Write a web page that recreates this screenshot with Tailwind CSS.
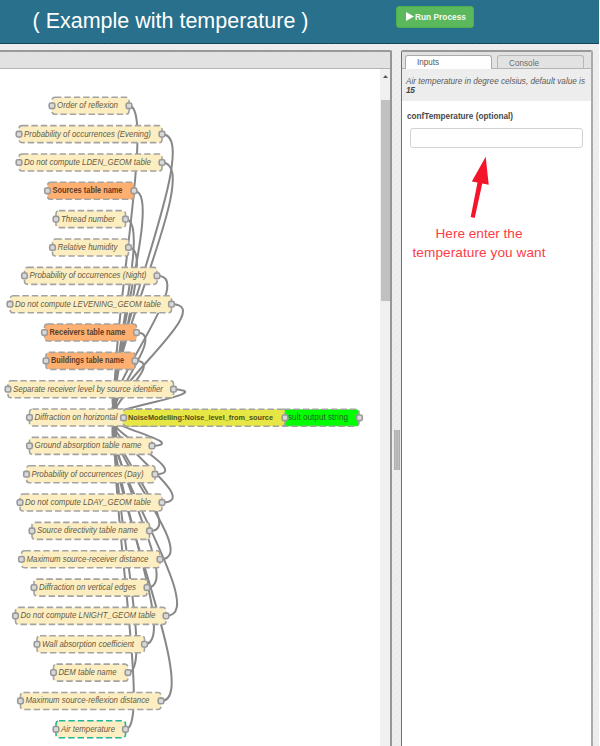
<!DOCTYPE html>
<html lang="en">
<head>
<meta charset="utf-8">
<title>Process editor</title>
<script src="https://cdn.jsdelivr.net/npm/@tailwindcss/browser@4"></script>
</head>
<body class="w-[600px] h-[746px] overflow-hidden bg-white font-['Liberation_Sans',Arial,sans-serif] flex flex-col">
<header class="w-[599px] h-[44px] shrink-0 bg-[#28708c] border-b border-[#174658] flex items-start pl-[32px]">
  <svg class="w-[280px] h-[40px] shrink-0" viewBox="0 0 280 40"><text x="0.5" y="27.7" font-size="21.5" fill="#fff" textLength="276" class="whitespace-pre">( Example with temperature )</text></svg>
  <button class="ml-[84px] mt-[6px] w-[78px] h-[22px] rounded-[3px] bg-[#5cb85c] border border-[#4cae4c] flex items-center justify-center">
    <svg class="w-[72px] h-[18px] overflow-visible" viewBox="-3 -1 72 18"><path d="M4 3L12 7.5L4 12Z" fill="#fff"/><text x="13" y="10.8" font-size="9.2" font-weight="bold" fill="#f3faf3" textLength="51" lengthAdjust="spacingAndGlyphs">Run Process</text></svg>
  </button>
</header>
<main class="flex-1 min-h-0 w-[599px] flex pt-[6px] bg-[repeating-linear-gradient(135deg,#eeeeee_0px,#eeeeee_2px,#e9e9e9_3px,#eeeeee_4px)]">
  <section class="w-[392px] shrink-0 border-t-2 border-r-2 border-t-[#999] border-r-[#969696] rounded-tr-[2px] flex flex-col bg-white">
    <div class="h-[17px] shrink-0 bg-[#e2e2e2] border-b border-[#b4b4b4]"></div>
    <div class="flex flex-1 min-h-0">
      <svg id="flow" class="w-[380px] h-[677px] shrink-0" viewBox="0 69 380 677" font-size="8.3"></svg>
      <div class="w-[10px] bg-[#f0f0f0] flex flex-col items-center">
        <svg class="w-[10px] h-[31px] shrink-0" viewBox="0 0 10 31"><path d="M3 9L5.5 6L8 9Z" fill="#555"/></svg>
        <div class="w-[9px] h-[201px] bg-[#c1c1c1]"></div>
      </div>
    </div>
  </section>
  <div class="w-[9px] pt-[380px]">
    <svg class="w-[9px] h-[40px]" viewBox="0 0 9 40"><path d="M2.9 0V40M5 0V40M7.1 0V40" stroke="#999" stroke-width="1.3"/></svg>
  </div>
  <aside class="w-[192px] shrink-0 border-t-2 border-l border-r-2 border-t-[#999] border-l-[#707070] border-r-[#aaa] rounded-t-[2px] flex flex-col bg-white">
    <div class="h-[17px] shrink-0 bg-[#e2e2e2] border-b border-[#b4b4b4] flex items-end gap-[5px] pl-[3px]">
      <div class="w-[87px] h-[14px] -mb-[1px] rounded-t-[3px] bg-white border border-b-0 border-[#aaa]"><svg class="w-[85px] h-[13px]" viewBox="0 0 85 13"><text x="11" y="9.3" font-size="9" fill="#555" textLength="22" lengthAdjust="spacingAndGlyphs">Inputs</text></svg></div>
      <div class="w-[87px] h-[13px] rounded-t-[3px] bg-[#e2e2e2] border border-b-0 border-[#b8b8b8]"><svg class="w-[85px] h-[12px]" viewBox="0 0 85 12"><text x="11" y="9.5" font-size="9" fill="#6c6c6c" textLength="30" lengthAdjust="spacingAndGlyphs">Console</text></svg></div>
    </div>
    <div class="h-[32px] shrink-0 bg-[#ededed]"><svg class="w-[189px] h-[32px]" viewBox="402 69 189 32" fill="#5a5a5a"><text x="406" y="84" font-size="8.3" font-style="italic" textLength="179" lengthAdjust="spacingAndGlyphs">Air temperature in degree celsius, default value is</text><text x="406" y="93" font-size="8.4" font-weight="bold" font-style="italic" fill="#444" textLength="9">15</text></svg></div>
    <label class="block h-[27px] shrink-0"><svg class="w-[189px] h-[27px]" viewBox="402 101 189 27"><text x="407" y="119" font-size="8.6" font-weight="bold" fill="#484848" textLength="106" lengthAdjust="spacingAndGlyphs">confTemperature (optional)</text></svg></label>
    <input aria-label="confTemperature" class="block ml-[8px] w-[173px] h-[20px] rounded-[3px] border border-[#d2d2d2] bg-white shrink-0">
    <svg class="w-[189px] h-[120px]" viewBox="402 148 189 120"><path d="M485.7 156.7L471.8 181.4L477.5 182.6L470.7 217L474.7 218L482.3 183.5L488.7 184.8Z" fill="#f5152a"/><g font-size="13.6" fill="#fb4045"><text x="435.5" y="238" textLength="87">Here enter the</text><text x="412.5" y="257" textLength="133">temperature you want</text></g></svg>
  </aside>
</main>
<script>
// [left port x, right port x, label, text width, required]
const inputs = [
  [52,129,'Order of reflexion',61], [19,162,'Probability of occurrences (Evening)',127],
  [19,162,'Do not compute LDEN_GEOM table',127], [47.5,134,'Sources table name',70,1],
  [56,125.5,'Thread number',54], [52.5,128.5,'Relative humidity',60],
  [24.5,157,'Probability of occurrences (Night)',117], [10,171.5,'Do not compute LEVENING_GEOM table',146],
  [44.5,136.5,'Receivers table name',76,1], [46,135,'Buildings table name',73,1],
  [8,173.5,'Separate receiver level by source identifier',150], [29.5,160,'Diffraction on horizontal',83],
  [29.5,152,'Ground absorption table name',107], [26.5,155,'Probability of occurrences (Day)',112],
  [20,162,'Do not compute LDAY_GEOM table',126], [32,149.5,'Source directivity table name',101],
  [21.5,160,'Maximum source-receiver distance',122], [34,147,'Diffraction on vertical edges',97],
  [15.5,166,'Do not compute LNIGHT_GEOM table',135], [37,144.5,'Wall absorption coefficient',92],
  [53.5,128,'DEM table name',58], [20.5,161,'Maximum source-reflexion distance',124],
  [56,125.5,'Air temperature',54]];
const tx = 123.5, ty = 417.8;
let wires = '', nodes = '';
const port = (x, y) => `<rect x="${x-2.8}" y="${y-2.8}" width="5.6" height="5.6" rx="1.6" fill="#d9d9d9" stroke="#999" stroke-width="1.6"/>`;
const box = (l, r, y, fill, stroke) => `<rect x="${l}" y="${y-8.5}" width="${r-l}" height="17" rx="3" fill="${fill}" stroke="${stroke}" stroke-width="1.6" stroke-dasharray="6.4 3"/>`;
inputs.forEach(([l, r, label, w, req], i) => {
  const y = 105.8 + i * 28.34, dx = Math.abs(tx - r), dy = ty - y;
  const a = 28.5 + .53 * dx;
  const b = Math.abs(dy) < 51 ? Math.sign(dy) * 8.5 * (51 - Math.abs(dy)) / 51 * Math.min(1, dx / 57) : 0;
  if (i !== 11) wires += `<path d="M${r} ${y}C${r+a} ${y+b} ${tx-a} ${ty-b} ${tx} ${ty}"/>`;
  nodes += box(l, r, y, req ? '#ffb070' : '#fdeec2', i === 22 ? '#1fb595' : '#a3a3a3') + port(l, y) + port(r, y) +
    `<text x="${l+5}" y="${y+2.5}" textLength="${w}" lengthAdjust="spacingAndGlyphs" fill="${req ? '#593d27' : '#5f5a48'}" ${req ? 'font-weight="bold"' : 'font-style="italic"'}>${label}</text>`;
});
const out = box(281, 359, ty, '#00ff00', '#a3a3a3') + port(359.5, ty) + `<text x="288" y="${ty+2.5}" textLength="60" lengthAdjust="spacingAndGlyphs" fill="#245f20">sult output string</text>`;
const proc = box(123.5, 285, ty, '#e6e645', '#a3a3a3') + port(tx, ty) + port(285, ty) + `<text x="128" y="${ty+2.5}" font-size="8" textLength="145" lengthAdjust="spacingAndGlyphs" font-weight="bold" fill="#50501c">NoiseModelling:Noise_level_from_source</text>`;
document.getElementById('flow').innerHTML = `<g fill="none" stroke="#878787" stroke-width="2">${wires}</g>${nodes}${out}${proc}`;
</script>
</body>
</html>
